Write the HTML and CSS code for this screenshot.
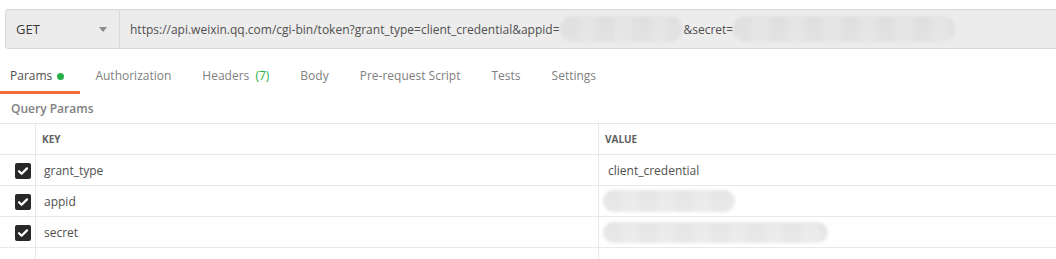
FILE: index.html
```html
<!DOCTYPE html>
<html lang="en">

<head>
    <meta charset="UTF-8">
    <title>Request - Params</title>
    <link rel="stylesheet" href="styles.css">
</head>

<body>
    <div class="url-bar">
        <div class="method">
            <span>GET</span>
            <span class="caret"></span>
        </div>
        <div class="url">
            https://api.weixin.qq.com/cgi-bin/token?grant_type=client_credential&amp;appid=<span class="blur blur-appid"></span>&amp;secret=<span class="blur blur-secret"></span>
        </div>
    </div>

    <ul class="tabs">
        <li class="active">Params <span class="dot"></span></li>
        <li>Authorization</li>
        <li>Headers <span class="count">(7)</span></li>
        <li>Body</li>
        <li>Pre-request Script</li>
        <li>Tests</li>
        <li>Settings</li>
    </ul>

    <div class="section-title">Query Params</div>

    <table class="params">
        <tr class="head">
            <td class="check"></td>
            <td class="key">KEY</td>
            <td>VALUE</td>
        </tr>
        <tr>
            <td class="check"><span class="box"><svg viewBox="0 0 16 16" width="16" height="16"><path d="M4 8.2l2.6 2.6L12 5.4" fill="none" stroke="#fff" stroke-width="2.2" stroke-linecap="round" stroke-linejoin="round"/></svg></span></td>
            <td class="key">grant_type</td>
            <td class="val">client_credential</td>
        </tr>
        <tr>
            <td class="check"><span class="box"><svg viewBox="0 0 16 16" width="16" height="16"><path d="M4 8.2l2.6 2.6L12 5.4" fill="none" stroke="#fff" stroke-width="2.2" stroke-linecap="round" stroke-linejoin="round"/></svg></span></td>
            <td class="key">appid</td>
            <td class="val"><span class="blur blur-v1"></span></td>
        </tr>
        <tr>
            <td class="check"><span class="box"><svg viewBox="0 0 16 16" width="16" height="16"><path d="M4 8.2l2.6 2.6L12 5.4" fill="none" stroke="#fff" stroke-width="2.2" stroke-linecap="round" stroke-linejoin="round"/></svg></span></td>
            <td class="key">secret</td>
            <td class="val"><span class="blur blur-v2"></span></td>
        </tr>
        <tr class="empty">
            <td class="check"></td>
            <td class="key"></td>
            <td></td>
        </tr>
    </table>
</body>

</html>
```

FILE: styles.css
```css
body {
    font-family: 'Open Sans', sans-serif;
    font-size: 12px;
    margin: 0;
    color: #505050;
    background: #fff;
    overflow: hidden;
}

.url-bar {
    display: flex;
    height: 38px;
    margin: 9px -10px 0 5px;
    background: #ececec;
    border: 1px solid #d8d8d8;
    border-radius: 3px;
}

.method {
    width: 114px;
    box-sizing: border-box;
    padding: 0 12px 0 10px;
    display: flex;
    align-items: center;
    justify-content: space-between;
    border-right: 1px solid #d8d8d8;
    font-size: 13px;
    color: #3a3a3a;
}

.caret {
    width: 0;
    height: 0;
    border-left: 4px solid transparent;
    border-right: 4px solid transparent;
    border-top: 5px solid #8a8a8a;
    margin-top: 1px;
}

.url {
    padding-left: 10px;
    display: flex;
    align-items: center;
    white-space: nowrap;
    color: #505050;
}

/* masked values */
.blur {
    display: inline-block;
    border-radius: 14px;
    background:
        repeating-linear-gradient(90deg, rgba(0, 0, 0, 0.015) 0 18px, rgba(0, 0, 0, 0) 18px 36px),
        linear-gradient(#e9e9e9, #ececec);
    filter: blur(1.5px);
}

.url .blur {
    background:
        repeating-linear-gradient(90deg, rgba(0, 0, 0, 0.02) 0 18px, rgba(0, 0, 0, 0) 18px 36px),
        linear-gradient(#e3e3e3, #e6e6e6);
}

.blur-appid {
    width: 122px;
    height: 26px;
    margin: 0 2px 0 0;
}

.blur-secret {
    width: 222px;
    height: 26px;
}

.tabs {
    list-style: none;
    display: flex;
    gap: 5px;
    margin: 12px 0 0;
    padding: 0;
}

.tabs li {
    padding: 6px 16px 7px 10px;
    color: #808080;
    border-bottom: 3px solid transparent;
    white-space: nowrap;
}

.tabs li.active {
    color: #505050;
    border-bottom-color: #f26b3a;
}

.dot {
    display: inline-block;
    width: 7px;
    height: 7px;
    border-radius: 50%;
    background: #26b047;
    margin-left: 2px;
    vertical-align: 0;
}

.count {
    color: #26b047;
    margin-left: 3px;
}

.section-title {
    padding: 6px 0 6px 11px;
    color: #808080;
    font-weight: 600;
    font-size: 12px;
}

.params {
    width: calc(100% + 20px);
    border-collapse: collapse;
    table-layout: fixed;
}

.params td {
    height: 30px;
    border-top: 1px solid #e8e8e8;
    border-bottom: 1px solid #e8e8e8;
    padding: 0 0 0 8px;
    white-space: nowrap;
}

.params .check {
    width: 35px;
    padding: 0;
    border-right: 1px solid #e8e8e8;
}

.params .key {
    width: 556px;
    border-right: 1px solid #e8e8e8;
}

.params .head td {
    font-size: 10px;
    font-weight: 700;
    color: #606060;
    padding-left: 6px;
}

.params .head td.check {
    padding: 0;
}

.params .val {
    padding-left: 9px;
}

.box {
    display: inline-flex;
    width: 16px;
    height: 16px;
    background: #282828;
    border-radius: 2px;
    vertical-align: middle;
    margin-left: 15px;
}

.val .blur {
    vertical-align: middle;
    margin-left: -5px;
}

.blur-v1 {
    width: 132px;
    height: 22px;
    border-radius: 11px;
}

.blur-v2 {
    width: 225px;
    height: 21px;
    border-radius: 11px;
}

.empty td {
    border-bottom: none;
}
```
